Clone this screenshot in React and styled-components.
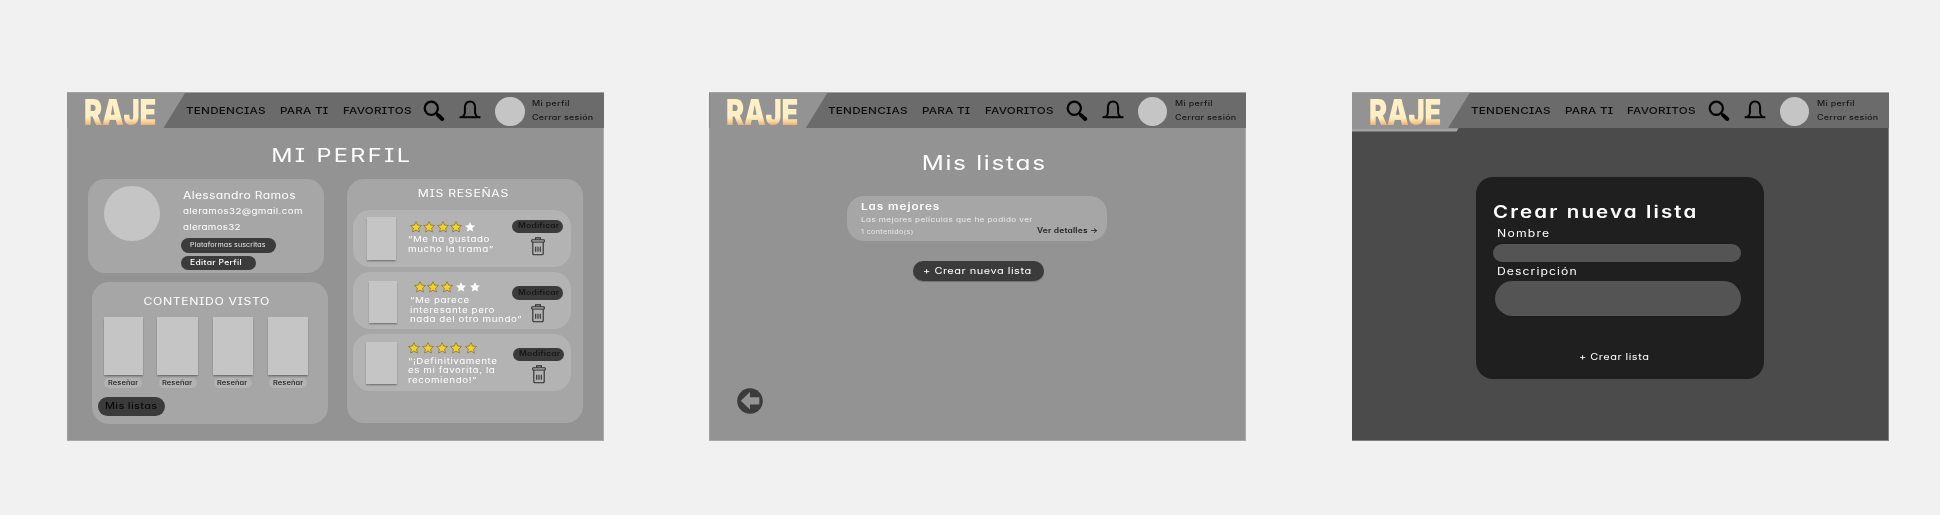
import React from 'react';
import styled, { createGlobalStyle, css } from 'styled-components';

const GlobalStyle = createGlobalStyle`
  * { box-sizing: border-box; }
  body { margin: 0; background: #f1f1f1; }
`;

const Board = styled.main`
  display: flex;
  gap: 105.3px;
  width: 1940px;
  height: 515px;
  padding: 92px 0 0 67px;
  overflow: hidden;
  font-family: Inter, 'Noto Sans', sans-serif;
`;

const Frame = styled.section`
  flex: none;
  display: flex;
  flex-direction: column;
  width: 537px;
  height: 349px;
  background: ${p => (p.$dim ? '#4b4b4b' : '#939393')};
  box-shadow: inset -1px -1px 0 ${p => (p.$dim ? '#808080' : '#a9a9a9')}, inset 1px 0 0 ${p => (p.$dim ? '#4b4b4b' : '#a0a0a0')};
`;

/* Wide lettering with a serifed capital I and single-storey a. */
const Text = styled.div`
  font-feature-settings: 'cv08' 1, 'cv11' 1;
  font-size: ${p => p.$size}px;
  font-weight: ${p => p.$weight || 400};
  letter-spacing: ${p => p.$track || 0}px;
  line-height: ${p => p.$line || 12}px;
  color: ${p => p.$color || '#fff'};
  white-space: pre;
  transform: scaleX(1.22);
  transform-origin: ${p => (p.$center ? 'center' : 'left')};
`;

const Header = styled.header`
  flex: none;
  display: flex;
  height: 36px;
  background: #6b6b6b;
  border-top: 1px solid #a0a0a0;
`;

const LogoPlate = styled.div`
  flex: none;
  width: 118px;
  height: ${p => (p.$raised ? 38.5 : 35)}px;
  padding: 2.5px 0 0 17px;
  background: ${p => (p.$raised ? 'linear-gradient(#939393 36px, #a3a3a3 36px)' : '#939393')};
  clip-path: ${p => p.$raised
    ? 'polygon(0 0, 118px 0, 96.5px 35px, 107px 35px, 105px 38.5px, 0 38.5px)'
    : 'polygon(0 0, 118px 0, 96.5px 35px, 0 35px)'};
`;

const Wordmark = styled.div`
  width: 100px;
  font: 900 36px/33px Inter, sans-serif;
  letter-spacing: -0.4px;
  transform: scaleX(0.76);
  transform-origin: left;
  color: transparent;
  background: linear-gradient(#ffefc4 0 65%, #fbd79c 76%, #e6a070 92%);
  background-clip: text;
  -webkit-background-clip: text;
`;

const Nav = styled.nav`
  display: grid;
  grid-template-columns: 94px 62.7px 80.5px 36px 36px 37px 70px;
  align-items: center;
  height: 36.5px;
  padding-left: 1.2px;
`;

const Disc = styled.div`
  flex: none;
  width: ${p => p.$d}px;
  height: ${p => p.$d}px;
  border-radius: 50%;
  background: #c5c5c5;
`;

const AccountLinks = styled.div`
  display: flex;
  flex-direction: column;
  gap: 2px;
`;

const PageTitle = styled.h1`
  display: flex;
  justify-content: center;
  margin: 0;
  height: ${p => p.$h}px;
  padding: ${p => p.$pad}px 0 0 12.5px;
`;

const Columns = styled.div`
  display: flex;
  gap: 18.5px;
  padding-left: 21px;
`;

const LeftColumn = styled.div`
  display: flex;
  flex-direction: column;
  gap: 9px;
  width: 240px;
`;

const Card = styled.section`
  background: #a6a6a6;
  border-radius: 17px;
  width: 236px;
`;

const ProfileCard = styled(Card)`
  display: flex;
  gap: 20px;
  height: 94px;
  padding: 7px 0 0 16px;
`;

const ProfileInfo = styled.div`
  padding: 3.5px 0 0 3.5px;
`;

const InfoLines = styled.div`
  display: grid;
  grid-template-rows: 16px 16px 17px;
`;

const PillGroup = styled.div`
  display: flex;
  flex-direction: column;
  align-items: flex-start;
  gap: 3.5px;
  margin-left: -2px;
`;

const Pill = styled.button`
  flex: none;
  display: flex;
  align-items: center;
  width: ${p => p.$w}px;
  height: ${p => p.$h}px;
  padding: 0 0 0 ${p => p.$inset}px;
  border: 0;
  border-radius: 20px;
  font: inherit;
  background: ${p => p.$bg || '#3b3b3b'};
  ${p => p.$lift && css`box-shadow: 0 1px 1px rgba(0, 0, 0, 0.22);`}
`;

const SeenCard = styled(Card)`
  align-self: flex-end;
  height: 142.5px;
  padding: 13px 0 0 5.5px;
`;

const CardTitle = styled.h2`
  display: flex;
  justify-content: center;
  margin: 0;
  height: ${p => p.$h}px;
  padding-right: ${p => p.$shift}px;
`;

const PosterRow = styled.div`
  display: flex;
  gap: 14.8px;
  padding-left: 6px;
  height: 80px;
`;

const PosterCell = styled.div`
  display: flex;
  flex-direction: column;
  align-items: center;
  gap: 3px;
`;

const Poster = styled.div`
  flex: none;
  width: ${p => p.$w}px;
  height: ${p => p.$h}px;
  background: #c5c5c5;
  box-shadow: 0 1.5px 1.5px rgba(0, 0, 0, 0.3);
`;

const ReviewsCard = styled(Card)`
  height: 244.5px;
  padding: 8px 0 0 6px;
`;

const ReviewList = styled.div`
  display: flex;
  flex-direction: column;
  gap: 5px;
`;

const Review = styled.article`
  display: grid;
  grid-template-columns: ${p => p.$cols};
  width: 218px;
  height: 57px;
  border-radius: 17px;
  background: #b3b3b3;
`;

const ReviewPoster = styled.div`
  padding: ${p => p.$pad};
`;

const ReviewBody = styled.div`
  padding-top: ${p => p.$top}px;
`;

const Stars = styled.div`
  display: flex;
  gap: ${p => p.$gap}px;
  height: ${p => p.$h}px;
  padding-left: ${p => p.$inset}px;
`;

const ReviewActions = styled.div`
  display: flex;
  flex-direction: column;
  align-items: center;
  gap: 4.5px;
  padding-top: ${p => p.$top}px;
`;

const ListArea = styled.div`
  display: flex;
  flex-direction: column;
  align-items: center;
  padding-left: 2px;
`;

const ListCard = styled(Card)`
  width: 259.5px;
  height: 44.7px;
  padding: 5px 0 0 14px;
  margin: 0 4px 20.3px 0;
`;

const ListMeta = styled.div`
  display: grid;
  grid-template-columns: 175.5px auto;
`;

const BackRow = styled.div`
  padding: 107px 0 0 27.5px;
`;

const Modal = styled.form`
  width: 288px;
  height: 202px;
  margin: 49px 0 0 124px;
  padding: 24.5px 0 0 17.5px;
  border-radius: 17px;
  background: #1f1f1f;
`;

const Label = styled.label`
  display: block;
  padding-left: 3.5px;
`;

const Field = styled.div`
  width: ${p => p.$w}px;
  height: ${p => p.$h}px;
  margin: ${p => p.$margin};
  border-radius: 18px;
  background: #545454;
`;

const Submit = styled.div`
  padding: 34.5px 0 0 85.5px;
`;

const SearchIcon = () => (
  <svg width="22" height="22" viewBox="0 0 22 22">
    <circle cx="8.3" cy="8.3" r="6.6" fill="none" stroke="#000" strokeWidth="2.2" />
    <path d="M12.8 12.8l3 3" stroke="#000" strokeWidth="2" />
    <path d="M15.3 15.4l3.9 3.6" stroke="#000" strokeWidth="4" strokeLinecap="round" />
  </svg>
);

const BellIcon = () => (
  <svg width="22" height="22" viewBox="0 0 22 22">
    <path d="M3.6 16.8c1.9-1.2 2.3-2.4 2.3-4.2V7.3C5.9 3.7 8.1 1.4 11 1.4s5.1 2.3 5.1 5.9v5.3c0 1.8.4 3 2.3 4.2" fill="none" stroke="#000" strokeWidth="2" />
    <path d="M.6 17.2h20.8" stroke="#000" strokeWidth="2" />
  </svg>
);

const Star = ({ on }) => (
  <svg width="12" height="12" viewBox="0 0 12 12">
    <path d="M6 .6l1.6 3.5 3.9.4-2.9 2.6.8 3.9L6 9.1l-3.4 1.9.8-3.9L.5 4.5l3.9-.4z"
      fill={on ? '#f4d02c' : '#fff'} stroke={on ? '#7d6d26' : '#999'} strokeWidth={on ? 0.7 : 0.3} strokeLinejoin="round" />
  </svg>
);

const TrashIcon = () => (
  <svg width="14" height="19" viewBox="0 0 14 19" fill="none" stroke="#2c2c2c">
    <path d="M4.6 2.5V.9h4.8v1.6" strokeWidth="1.1" />
    <path d="M.7 2.8h12.6v2.3H.7z" strokeWidth="1" />
    <path d="M1.8 5.3v11.2c0 .8.5 1.3 1.3 1.3h7.8c.8 0 1.3-.5 1.3-1.3V5.3" strokeWidth="1.1" />
    <path d="M4.7 9.8v5M7 9.8v5M9.3 9.8v5" strokeWidth="1.1" />
  </svg>
);

const BackIcon = () => (
  <svg width="26" height="26" viewBox="0 0 26 26">
    <circle cx="13" cy="13" r="12.8" fill="#3b3b3b" />
    <path d="M3.8 12.8L13 4v5.2h9.3v7.2H13v5.2z" fill="#939393" />
  </svg>
);

function TopBar({ raised }) {
  return (
    <Header>
      <LogoPlate $raised={raised}><Wordmark>RAJE</Wordmark></LogoPlate>
      <Nav>
        {['TENDENCIAS', 'PARA TI', 'FAVORITOS'].map(label => (
          <Text key={label} $size={9.6} $weight={500} $track={0.17} $color="#0c0c0c">{label}</Text>
        ))}
        <SearchIcon />
        <BellIcon />
        <Disc $d={29.5} />
        <AccountLinks>
          <Text $size={7.3} $weight={500} $track={0.26} $color="#181818">Mi perfil</Text>
          <Text $size={7.3} $weight={500} $track={0.24} $color="#181818">Cerrar sesión</Text>
        </AccountLinks>
      </Nav>
    </Header>
  );
}

const reviews = [
  { stars: 4, inset: 2, gap: 1.6, starRow: 14, top: 11, cols: '55px 105px 50px', poster: [29, 43.5, '6.5px 0 0 14.5px'], actions: 9.5,
    lines: ['“Me ha gustado', 'mucho la trama”'] },
  { stars: 3, inset: 4, gap: 1.8, starRow: 15, top: 9, cols: '57px 103px 50px', poster: [28.5, 42.5, '8.5px 0 0 16px'], actions: 14.3,
    lines: ['“Me parece', 'interesante pero', 'nada del otro mundo”'] },
  { stars: 5, inset: 0, gap: 2.3, starRow: 15, top: 7.6, cols: '55px 106px 50px', poster: [31, 42.5, '7.5px 0 0 13.5px'], actions: 13.5,
    lines: ['“¡Definitivamente', 'es mi favorita, la', 'recomiendo!”'] },
];

function ReviewItem({ review }) {
  const [w, h, pad] = review.poster;
  return (
    <Review $cols={review.cols}>
      <ReviewPoster $pad={pad}><Poster $w={w} $h={h} /></ReviewPoster>
      <ReviewBody $top={review.top}>
        <Stars $inset={review.inset} $gap={review.gap} $h={review.starRow}>
          {[0, 1, 2, 3, 4].map(i => <Star key={i} on={i < review.stars} />)}
        </Stars>
        {review.lines.map(line => (
          <Text key={line} $size={8} $track={0.48} $line={9.6}>{line}</Text>
        ))}
      </ReviewBody>
      <ReviewActions $top={review.actions}>
        <Pill $w={51.5} $h={13.3} $inset={6.5}>
          <Text $size={7} $weight={600} $track={0.13} $color="#161616">Modificar</Text>
        </Pill>
        <TrashIcon />
      </ReviewActions>
    </Review>
  );
}

function ProfileScreen() {
  return (
    <Frame>
      <TopBar />
      <PageTitle $h={50.5} $pad={21}>
        <Text $size={19.3} $track={1.9} $center>MI PERFIL</Text>
      </PageTitle>
      <Columns>
        <LeftColumn>
          <ProfileCard>
            <Disc $d={55.5} />
            <ProfileInfo>
              <InfoLines>
                <Text $size={10} $track={0.24}>Alessandro Ramos</Text>
                <Text $size={8} $track={0.3}>aleramos32@gmail.com</Text>
                <Text $size={8} $track={0.22}>aleramos32</Text>
              </InfoLines>
              <PillGroup>
                <Pill $w={95} $h={14.8} $inset={9}>
                  <Text $size={5.8} $track={0.09} $color="#e8e8e8">Plataformas suscritas</Text>
                </Pill>
                <Pill $w={74.5} $h={13.5} $inset={9}>
                  <Text $size={7} $weight={500} $track={0.26}>Editar Perfil</Text>
                </Pill>
              </PillGroup>
            </ProfileInfo>
          </ProfileCard>
          <SeenCard>
            <CardTitle $h={22} $shift={12}>
              <Text $size={10} $track={0.5} $center>CONTENIDO VISTO</Text>
            </CardTitle>
            <PosterRow>
              {[39, 40.5, 40.5, 40.5].map((w, i) => (
                <PosterCell key={i}>
                  <Poster $w={w} $h={58} />
                  <Pill $w={38} $h={10.5} $inset={3.5} $bg="#b3b3b3">
                    <Text $size={6.1} $weight={500} $track={0.1} $color="#1c1c1c">Reseñar</Text>
                  </Pill>
                </PosterCell>
              ))}
            </PosterRow>
            <Pill $w={67.5} $h={19.8} $inset={7}>
              <Text $size={9} $weight={500} $track={0.25} $color="#0a0a0a">Mis listas</Text>
            </Pill>
          </SeenCard>
        </LeftColumn>
        <ReviewsCard>
          <CardTitle $h={23.5} $shift={8}>
            <Text $size={10} $track={0.58} $center>MIS RESEÑAS</Text>
          </CardTitle>
          <ReviewList>
            {reviews.map(r => <ReviewItem key={r.stars} review={r} />)}
          </ReviewList>
        </ReviewsCard>
      </Columns>
    </Frame>
  );
}

function ListsScreen() {
  return (
    <Frame>
      <TopBar />
      <PageTitle $h={68} $pad={29.2}>
        <Text $size={20} $track={1.4} $center>Mis listas</Text>
      </PageTitle>
      <ListArea>
        <ListCard>
          <Text $size={9.6} $weight={600} $track={0.78}>Las mejores</Text>
          <Text $size={6.7} $track={0.33} $line={14} $color="#ececec">Las mejores películas que he podido ver</Text>
          <ListMeta>
            <Text $size={5.9} $track={0.28} $line={9} $color="#e8e8e8">1 contenido(s)</Text>
            <Text $size={6.9} $weight={600} $track={0.16} $line={7} $color="#222">Ver detalles →</Text>
          </ListMeta>
        </ListCard>
        <Pill $w={130.7} $h={20} $inset={10} $lift>
          <Text $size={9} $track={0.42}>+ Crear nueva lista</Text>
        </Pill>
      </ListArea>
      <BackRow><BackIcon /></BackRow>
    </Frame>
  );
}

function NewListScreen() {
  return (
    <Frame $dim>
      <TopBar raised />
      <Modal>
        <Text $size={16.8} $weight={600} $track={1.75} $line={20}>Crear nueva lista</Text>
        <Label><Text $size={10} $track={0.98} $line={22}>Nombre</Text></Label>
        <Field $w={248.5} $h={18.7} $margin="0 0 0 -0.5px" />
        <Label><Text $size={10} $track={0.87} $line={19}>Descripción</Text></Label>
        <Field $w={246} $h={35.3} $margin="0 0 0 2.2px" />
        <Submit><Text $size={9} $track={0.4}>+ Crear lista</Text></Submit>
      </Modal>
    </Frame>
  );
}

export default function App() {
  return (
    <>
      <GlobalStyle />
      <Board>
        <ProfileScreen />
        <ListsScreen />
        <NewListScreen />
      </Board>
    </>
  );
}
